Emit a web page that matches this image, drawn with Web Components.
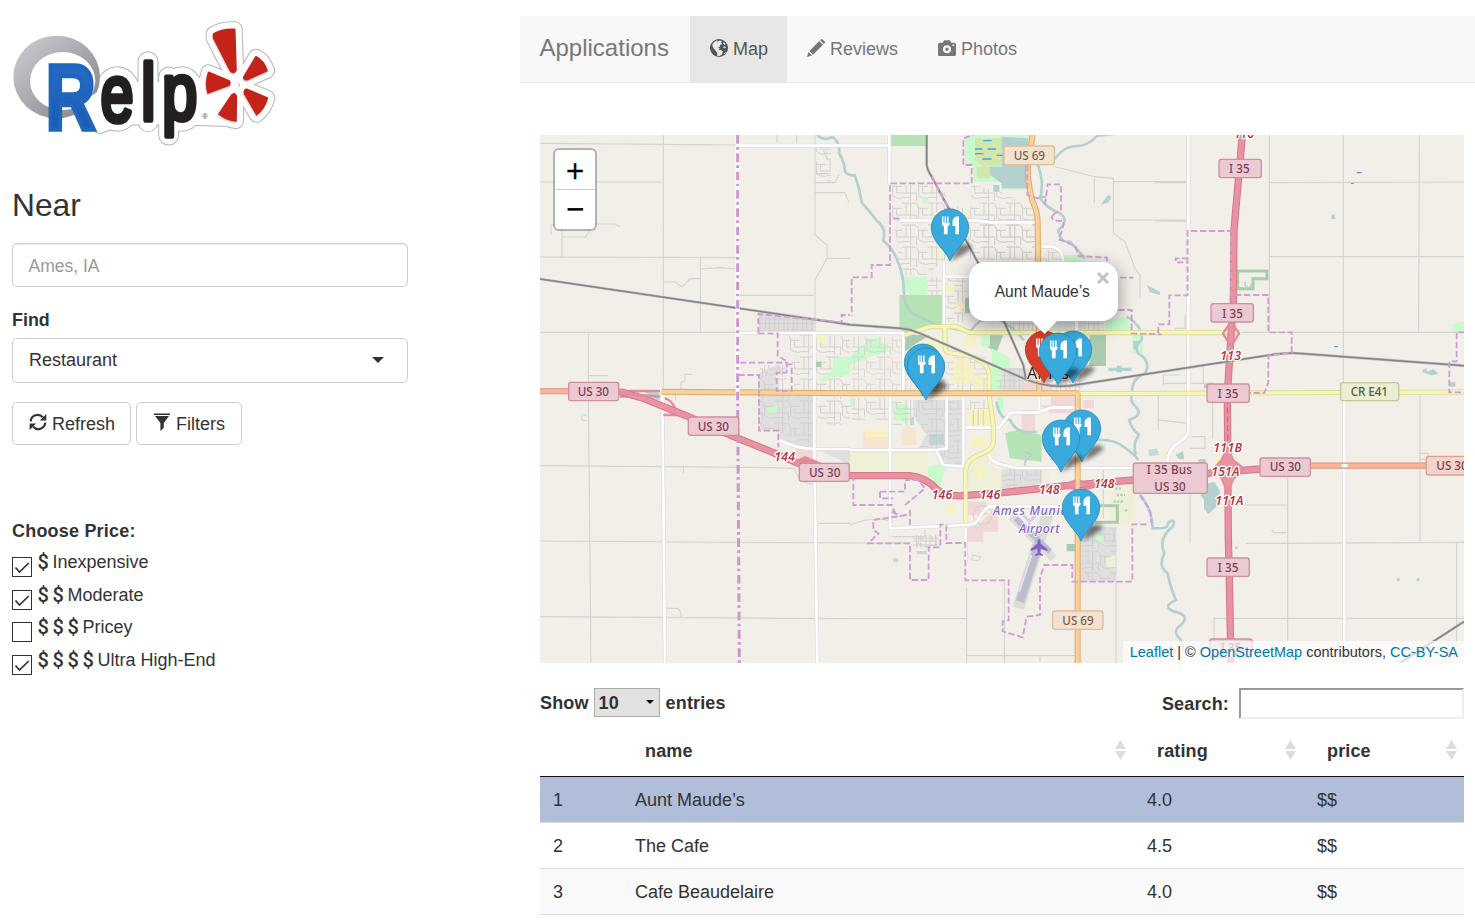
<!DOCTYPE html>
<html lang="en">
<head>
<meta charset="utf-8">
<title>Relp</title>
<style>
body{margin:0;background:#fff;font:18px/1.43 "Liberation Sans",Arial,sans-serif;color:#333;overflow:hidden}
</style>
</head>
<body>
<relp-page>
  <relp-logo slot="side"></relp-logo>
  <search-form slot="side">
    <icon-button slot="actions" icon="refresh">Refresh</icon-button>
    <icon-button slot="actions" icon="filter">Filters</icon-button>
  </search-form>
  <price-group slot="side" heading="Choose Price:">
    <price-option level="1" checked>Inexpensive</price-option>
    <price-option level="2" checked>Moderate</price-option>
    <price-option level="3">Pricey</price-option>
    <price-option level="4" checked>Ultra High-End</price-option>
  </price-group>
  <nav-bar slot="main" brand="Applications">
    <nav-tab icon="globe" active>Map</nav-tab>
    <nav-tab icon="pencil">Reviews</nav-tab>
    <nav-tab icon="camera">Photos</nav-tab>
  </nav-bar>
  <street-map slot="main">
    <map-pin style="left:390.7px;top:73.7px"></map-pin>
    <map-pin style="left:364.2px;top:209.3px"></map-pin>
    <map-pin style="left:366.5px;top:212.6px"></map-pin>
    <map-pin color="red" style="left:485px;top:195.5px"></map-pin>
    <map-pin style="left:513.7px;top:195.7px"></map-pin>
    <map-pin style="left:498.600px;top:198px"></map-pin>
    <map-pin style="left:522.500px;top:274.500px"></map-pin>
    <map-pin style="left:501.500px;top:284.500px"></map-pin>
    <map-pin style="left:521.500px;top:353.500px"></map-pin>
    <map-popup>Aunt Maude’s</map-popup>
  </street-map>
  <place-table slot="main"></place-table>
</relp-page>

<script>
const define = (name, html, setup) => {
  const t = document.createElement('template');
  t.innerHTML = html;
  customElements.define(name, class extends HTMLElement {
    constructor() {
      super();
      this.attachShadow({mode: 'open'}).append(t.content.cloneNode(true));
    }
    connectedCallback() { if (setup) setup(this, this.shadowRoot); }
  });
};

const icons = {
  refresh: '<g fill="none" stroke="currentColor" stroke-width="2.200"><path d="M1.700 8.300A7 7 0 0 1 13.800 4.200M16.300 9.700A7 7 0 0 1 4.200 13.800"/></g><path d="M17.300 1V7.500H10.800zM.7 17V10.500H7.200z"/>',
  filter: '<path d="M1 .5h16v1.500H1zM2 3h14l-5.200 7v4.700L7.400 18v-8z"/>',
  globe: '<circle cx="9" cy="9" r="9"/><path fill="#e7e7e7" d="M2.200 5.500Q5 1.600 7.500 1.300L7.600 3l1.900-1.600 2.300.5-.7 1.800 1.200 1.200-2 .9-.5 2-1.800.6 1.700.9-1.200 1.500 2.600.2 1.600 1.500-.6 2.900-3.200 1.900-1.700-.4.200-3-1.900-2.200L3 8.500z"/><path fill="#e7e7e7" d="m13 4.100 1.500-.600 1.100 1.600-1.500 1zM12.900 8l2.300-.7.5 1.500-1.500.6zM14 14.500l1.400-1.600.600.600-1.200 1.600z"/>',
  pencil: '<path d="M0 18l1.400-5 3.600 3.600zM2.400 12 12.300 2.100l3.700 3.700L6.100 15.700zM13.200 1.200l.8-.8q.8-.7 1.600 0l2.100 2.100q.7.800 0 1.600l-.8.8z"/>',
  camera: '<path fill-rule="evenodd" d="M1.600 3.800h3L6.200 1.300h5.600l1.600 2.500h3q1.600 0 1.600 1.600v10q0 1.600-1.600 1.600H1.600Q0 17 0 15.400v-10q0-1.600 1.600-1.600zM9 6.300a4 4 0 1 0 0 8 4 4 0 0 0 0-8zm0 2.300a1.700 1.700 0 1 1 0 3.400 1.700 1.700 0 0 1 0-3.400zM14.500 5.500h1.700v1.400h-1.700z"/>'
};

customElements.define('ui-icon', class extends HTMLElement {
  static observedAttributes = ['name'];
  constructor() {
    super();
    this.attachShadow({mode: 'open'}).innerHTML = '<style>:host{display:inline-block;width:18px;height:18px;flex:none}svg{display:block;fill:currentColor}</style><svg width="18" height="18" viewBox="0 0 18 18"></svg>';
  }
  attributeChangedCallback(_, old, name) { this.shadowRoot.querySelector('svg').innerHTML = icons[name] || ''; }
});

define('relp-page', `<style>
:host{display:grid;grid-template-columns:520px 955px;width:1475px;height:920px;overflow:hidden}
aside{box-sizing:border-box;padding:10px 112px 0 12px}
main{padding-top:16px;min-width:0}
</style><aside><slot name="side"></slot></aside><main><slot name="main"></slot></main>`);

define('relp-logo', `<style>:host{display:block;margin-left:-12px;height:145px}svg{display:block}
.e{font:238px "Liberation Sans",sans-serif;stroke-linejoin:round}
.r{font:bold 278px "Liberation Sans",sans-serif}</style>
<svg width="290" height="145" viewBox="0 0 870 435">
<defs>
<linearGradient id="ring" x1="0" y1="0" x2="1" y2="1"><stop offset="0" stop-color="#ced0d4"/><stop offset="1" stop-color="#7f8187"/></linearGradient>
<linearGradient id="blue" x1="0" y1="0" x2="0" y2="1"><stop offset="0" stop-color="#2a6fce"/><stop offset="1" stop-color="#1559a8"/></linearGradient>
<g id="star"><path d="M641 72Q665 56 704 58L708 180Q700 193 691 182L641 84Z"/><path d="M731 202L768 140Q792 152 801 182L742 209Q732 210 731 202Z"/><path d="M626 187L688 213Q692 220 687 226L624 249Q615 218 626 187Z"/><path d="M740 238L802 264Q794 295 770 314L733 250Q733 238 740 238Z"/><path d="M703 251L709 258L708 333Q680 330 657 312L696 254Z"/></g>
<g id="body"><ellipse cx="352" cy="267" rx="48" ry="72"/><rect x="439" y="150" width="10" height="190" rx="5"/><ellipse cx="545" cy="267" rx="46" ry="72"/><rect x="501" y="196" width="10" height="184" rx="5"/><path d="M340 240H560L690 200L700 325L560 320H340Z"/><path d="M300 345L340 330V260L310 280Z"/></g>
</defs>
<g fill="#b5b5b5" stroke="#b5b5b5" stroke-width="53" stroke-linejoin="round"><use href="#star" stroke-width="48"/><use href="#body"/></g>
<g fill="#fff" stroke="#fff" stroke-width="47" stroke-linejoin="round"><use href="#star" stroke-width="42"/><use href="#body"/></g>
<path fill="url(#ring)" fill-rule="evenodd" d="M40 201A130 124 0 1 1 300 201A130 124 0 1 1 40 201ZM90 213A98 87 0 1 0 286 213A98 87 0 1 0 90 213Z"/>
<path fill="#fff" d="M232 285L286 250L303 240L303 330L292 365H270Z"/>
<text class="r" fill="url(#blue)" stroke="#1f66bd" stroke-width="14" transform="translate(137 356) scale(.745 1)">R</text>
<g class="e" fill="#231f20" stroke="#231f20" stroke-width="17"><text transform="translate(302 334) scale(.74 1)">e</text><text transform="translate(424 331) scale(.8 1)">l</text><text transform="translate(487 326) scale(.79 1)">p</text></g>
<text x="607" y="328" style="font:22px 'Liberation Sans'" fill="#444">®</text>
<use href="#star" fill="#eadcdc" stroke="#eadcdc" stroke-width="6" stroke-linejoin="round" transform="translate(-2 5)"/>
<use href="#star" fill="#c4231a" stroke="#c4231a" stroke-width="5" stroke-linejoin="round"/>
</svg>`);

define('search-form', `<style>
:host{display:block;padding-top:27px;width:396px}
h3{font:31.700px/46px "Liberation Sans",sans-serif;margin:0 0 15px}
.box{box-sizing:border-box;border:1px solid #ccc;border-radius:5px;height:44px;padding:0 16px;line-height:42px;display:flex;justify-content:space-between;align-items:center}
.in{color:#999;font-size:17.500px;box-shadow:inset 0 1px 1px rgba(0,0,0,.075)}.in span{padding-top:1px;margin-left:-.5px}
label{display:block;font-weight:bold;line-height:26px;margin:20px 0 5px;font-size:17.900px}
.sel{height:45px;padding-right:23px}.sel span{padding-bottom:1px}
.sel i{border:6px solid transparent;border-top-color:#333;border-bottom:0;margin-top:-1px}
.act{display:flex;gap:5px;padding-top:19px}
</style><h3>Near</h3><div class="box in"><span>Ames, IA</span></div><label>Find</label><div class="box sel"><span>Restaurant</span><i></i></div><div class="act"><slot name="actions"></slot></div>`);

define('icon-button', `<style>:host{box-sizing:border-box;display:inline-flex;align-items:center;gap:5px;height:43px;border:1px solid #ccc;border-radius:5px;padding:0 15px 0 16px}
:host([icon=filter]){padding-right:16px}
ui-icon{position:relative;top:-2px}span{padding-top:2px}</style><ui-icon></ui-icon><span><slot></slot></span>`,
  (el, r) => r.querySelector('ui-icon').setAttribute('name', el.getAttribute('icon')));
</script>
<script>
define('price-group', `<style>:host{display:block;padding-top:73px}b{display:block;line-height:26px;margin-bottom:4px;letter-spacing:.2px}</style><b></b><slot></slot>`,
  (el, r) => { r.querySelector('b').textContent = el.getAttribute('heading'); });

define('price-option', `<style>:host{display:flex;height:32.700px;align-items:flex-start;line-height:28px}
.c{box-sizing:border-box;width:20px;height:20px;border:1px solid #333;margin:9px 5.500px 0 0}
svg{display:block}:host(:not([checked])) svg{display:none}
.d{display:flex;font:500 20px/28px Roboto,sans-serif}.d span{width:15px}
</style><span class="c"><svg width="18" height="18" viewBox="0 0 18 18"><path d="M2.500 9.500l4 4.500L15.700 5" fill="none" stroke="#333" stroke-width="1.700"/></svg></span><span class="d"></span><span class="t"><slot></slot></span>`,
  (el, r) => { r.querySelector('.d').innerHTML = '<span>$</span>'.repeat(+el.getAttribute('level')); });

define('nav-bar', `<style>:host{display:flex;height:66px;background:#f8f8f8;border-bottom:1px solid #e7e7e7;color:#777}
b{font:24px/64px "Liberation Sans",sans-serif;padding:0 20.500px 0 19.500px;width:130px}</style><b></b><slot></slot>`,
  (el, r) => { r.querySelector('b').textContent = el.getAttribute('brand'); });

define('nav-tab', `<style>:host{display:flex;align-items:center;gap:5px;padding:0 20px;color:#777}:host([active]){background:#e7e7e7;color:#555;padding-right:19px}ui-icon{position:relative;top:-1px}span{padding-top:1px}
</style><ui-icon></ui-icon><span><slot></slot></span>`,
  (el, r) => r.querySelector('ui-icon').setAttribute('name', el.getAttribute('icon')));

define('map-pin', `<style>:host{display:block;position:absolute;width:38px;height:52px}svg{display:block;overflow:visible}:host{--c:#38aadd;--e:#267fa8}:host([color=red]){--c:#d63e2a;--e:#a52d1e}</style>
<svg width="38" height="52" viewBox="0 0 38 52"><defs><filter id="b" x="-40%" y="-40%" width="180%" height="180%"><feGaussianBlur stdDeviation="2.200"/></filter></defs>
<path d="M19 52L28 36Q38 34 41 38Q37 44 19 52Z" opacity=".5" filter="url(#b)"/>
<path d="M19 52C14.500 41 .3 32 .3 18.700a18.700 18.700 0 0 1 37.400 0C37.700 32 23.500 41 19 52Z" style="fill:var(--c);stroke:var(--e)" stroke-width=".7"/>
<path fill="#fff" d="M11 7.500h1.500V14h1V7.500h1.600V14h1V7.500h1.500V14h1V7.500V15q0 1.500-2 2.500v7.700h-3.700V17.500Q11 16.500 11 15zM28 7.500v17.700h-3.600V17h-2.900v-4.500q.5-3.500 3.500-5z"/></svg>`);

define('map-popup', `<style>:host{position:absolute;left:429px;top:127px;width:149px;height:58.500px;display:flex;align-items:center;justify-content:center;background:#fff;border-radius:16px;font-size:15.600px;box-shadow:0 4px 18px rgba(0,0,0,.4)}
.x{position:absolute;right:8.500px;top:9px}.t{position:absolute;top:58px;left:62px}svg{display:block}span{padding:1.500px 2.500px 0 0}</style>
<svg class="t" width="27" height="15"><path d="M0 0H27L13.500 14Z" fill="#fff"/></svg>
<span><slot></slot></span><svg class="x" width="14" height="14"><path d="M2 2l10 10M12 2L2 12" stroke="#c3c3c3" stroke-width="3"/></svg>`);

define('street-map', `<style>
:host{display:block;position:relative;width:924px;height:528px;margin:52px 0 0 20px;overflow:hidden;background:#f2efe9}
svg{display:block}
.z{position:absolute;left:13px;top:13px;border:2px solid rgba(0,0,0,.25);border-radius:6px;background:#fff;background-clip:padding-box;width:40px;height:79px;display:grid;grid-template-rows:39px 40px;font:24px/42px "DejaVu Sans",sans-serif;text-align:center;color:#000;-webkit-text-stroke:.4px #000}
.z span+span{border-top:1px solid #ccc;line-height:39px}
.a{position:absolute;right:0;bottom:0;height:22px;line-height:23px;padding:0 6px 0 7px;background:rgba(255,255,255,.7);font-size:14.500px;white-space:nowrap}
.a span{color:#0078a8}
.mi{fill:none;stroke:#d3d3d1;stroke-width:3.300}
.wc{fill:none;stroke:#dedbd8;stroke-width:12}.w{fill:none;stroke:#fff;stroke-width:8}
.bd{fill:none;stroke:#d19dd2;stroke-width:5.500;stroke-dasharray:19 8}
.wa{fill:none;stroke:#b4d0d1;stroke-width:8;stroke-linejoin:round}
.lk{fill:#b4d0d1}.gr{fill:#b5e3b5}.lg{fill:#c8facc}.dg{fill:#aacbaf}.re{fill:#e0dfdf}.ye{fill:#f7f3bd}.pk{fill:#f1d8d6}.ed{fill:#f0f0d8}
.sh rect{stroke-width:4;rx:7px}.sh text,.ex text{font-family:"Noto Sans",sans-serif;text-anchor:middle}
.sh text{font-size:35px;font-weight:500;fill:#7e3e58}.ex text{font-size:37px;font-style:italic;font-weight:600;fill:#b03a42;stroke:#fff;stroke-width:8;paint-order:stroke;stroke-linejoin:round}
</style>
<svg width="924" height="528" viewBox="0 0 2772 1584">
<defs>
<pattern id="s1" width="78" height="66" patternUnits="userSpaceOnUse"><path d="M0 6H40Q48 8 50 22H78M12 6V42H0M26 6V66M12 42H44V66M50 22V50Q60 60 78 58M62 22V42H78M0 56H26" fill="none" stroke="#d2d0ce" stroke-width="3"/></pattern>
<pattern id="s2" width="28" height="34" patternUnits="userSpaceOnUse"><path d="M4 0V34M16 0V34M0 8H28M0 22H28" fill="none" stroke="#cdcbca" stroke-width="2.600"/></pattern>
</defs>
<!-- land use -->
<g>
<path class="re" d="M657 537L822 555V592H657Z"/><path fill="url(#s2)" d="M657 537L822 555V592H657Z"/>
<path class="re" d="M657 715L715 687L735 715H708V770H657Z"/><path class="re" d="M657 780H822V940L780 938L713 905V885H657Z"/><path fill="url(#s1)" d="M660 690H740V770H822V935L715 890H660Z"/>
<path fill="url(#s1)" d="M745 600H820V765H765Z"/><path fill="url(#s1)" d="M828 602H930V770H828Z"/><path fill="url(#s1)" d="M832 785H930V870H832ZM828 40h45v100h-45z"/>
<path class="lg" d="M840 735L880 705V670L930 665V720L880 725L850 742Z"/><path class="lg" d="M682 818l30-6v20l-26 2z"/><path class="dg" d="M828 680h16v16h-16z"/><path class="ye" d="M830 600h28v24h-28z"/>
<path class="lk" d="M312 768H358V796L335 790Z"/>
<path class="re" d="M835 945H930V985H920Z"/><path class="pk" d="M765 940h55v35h-55z"/>
</g>
<g transform="translate(930 0)">
<path class="gr" d="M120 0H228V33H120Z"/><path class="lg" d="M345 0H540V165H455V140H370V90H345Z"/><path fill="#d2e8aa" d="M375 10H455V90L400 95L375 75ZM380 95h40v35h-40z"/><path class="lk" d="M455 5L535 10V160H455V145L420 120V95H455Z"/>
<path d="M400 17h25M375 42h22M375 56h25M413 42h25M397 72h28M440 61h18" stroke="#4c9be0" stroke-width="4"/>
<path fill="url(#s1)" d="M125 150H270L300 200L360 230L365 150L450 170L555 220V375H360L340 320H290V370L230 420H150L140 320L125 250Z"/>
<path fill="url(#s1)" d="M225 425H350L360 560H225ZM400 250H555V370H400ZM572 345H635V380H572Z"/><path fill="url(#s2)" d="M480 560H760V588H480Z"/>
<path class="ye" d="M255 230h25v18h-25zM265 340h10v30h-10zM290 450h22v22h-22zM320 500h22v22h-22zM335 235h25v12h-25z"/>
<path class="gr" d="M148 480H280V580L240 575L165 600L148 575Z"/><path class="lg" d="M155 425H232V480H180L155 460ZM220 185l20 12-22 10zM643 360h50v22h-50z"/><path d="M175 500l20 30M210 495l30 50M225 540l30 20M250 500l15 40" stroke="#bfe3a8" stroke-width="5"/>
<path class="dg" d="M165 600H240L200 625L165 650ZM718 600H768V693H718ZM395 600H460L440 650L400 630ZM345 488h15v45h-15z"/>
<path class="lg" d="M0 665L35 630L115 625V650L60 665L0 690ZM45 610h50v20h-50zM770 555L830 545L850 590H765ZM848 600h30v55h-30zM395 600h25v35h-25z"/>
<path class="lg" d="M425 640L480 670V730L440 775H425Z"/>
<path fill="url(#s1)" d="M5 605H155V765H5ZM165 665H285V765H165ZM285 665H410V765H285Z" opacity=".75"/>
<path class="ye" d="M230 610h45v30h-45zM340 605h40v35h-40zM310 670l60 15v60h-60zM215 650h25v55h-25zM370 720h30v45h-30z" opacity=".8"/>
<path class="re" d="M455 700H525V770H455ZM590 560H700V590H590Z"/><path fill="url(#s2)" d="M440 735H700V775H440ZM455 700h70v50h-70z"/><path class="pk" d="M520 700h80v65h-80z"/>
<path class="lk" d="M775 698h70v10h-70zM800 692h15v20h-15zM755 205l20-25 10 5-12 18-22 6zM890 450l40 20v10l-30-8zM850 618h14v24h-14zM430 150h18v20h-18z"/>
</g>
<g transform="translate(930 780)">
<path class="ed" d="M0 170H230L235 245L0 232ZM355 185L440 160L430 220H600V260L360 290Z"/><path class="ed" d="M780 275h75v115h-75z"/>
<path class="lg" d="M130 25L175 30V100L160 80L130 75ZM232 215L290 205L270 285L235 265Z"/><path fill="#f8e5cf" d="M38 108h80v52h-80zM155 100h45v50h-45z"/>
<path class="re" d="M190 15H345V210H285L260 170H200L230 120L190 60Z"/><path fill="url(#s1)" d="M190 15H345V210H285L260 170H200L230 120L190 60Z"/><path fill="url(#s1)" d="M5 10H115V75H5ZM128 15H190V90H128ZM350 15H415V45H350Z"/>
<path class="ye" d="M358 42h60v50h-60zM45 105h70v20h-70zM365 125h45v30h-45zM380 215h20v40h-20zM290 330h25v25h-25z"/>
<path d="M370 45v45M385 45v45M400 45v45" stroke="#d6d0b0" stroke-width="3"/>
<path class="lk" d="M238 118h45v32h-45zM182 65h10v25h-10zM130 490h14v12h-14zM200 468h30v10h-30zM895 165l25-5 8 20-30 4z" opacity=".7"/>
<path class="gr" d="M465 115L500 105L575 120V200L480 190Z"/><path class="lg" d="M440 5h20v55l-20-25z"/><path class="pk" d="M515 45h40v65h-40zM568 30h35v-25h70v50h-70zM700 15h32v25h-32zM350 400L390 385L440 335L445 410H400V440H350ZM350 320h60v40h-60z"/>
<path class="re" d="M455 225L575 215V265L455 290ZM690 395H800V560H690Z"/><path fill="url(#s1)" d="M455 225L575 215V265L455 290ZM690 395H800V555H690ZM190 422h70v35h-70z"/><path fill="url(#s2)" d="M190 420h75v38h-75z"/><path class="lg" d="M740 415l25 18-10 10-20-8z"/><path class="ed" d="M768 490l28-10v35h-28z"/>
<path class="dg" d="M650 447h30v22h-30z"/><path d="M715 332H802V382H735" fill="none" stroke="#aacbaf" stroke-width="9"/>
<path class="lg" d="M0 40L10 30V0H0Z"/><path d="M795 280h20M800 300h25M790 320h30M825 345l10 5" stroke="#a9cfc3" stroke-width="7" stroke-dasharray="7 4"/>
<g fill="none"><path d="M595 350L505 640" stroke="#deddd2" stroke-width="36"/><path d="M485 365L610 490" stroke="#deddd2" stroke-width="24"/><path d="M570 435L510 620" stroke="#bbbdd0" stroke-width="26"/><path d="M497 370L600 470" stroke="#bbbdd0" stroke-width="18"/><path d="M545 480L508 590" stroke="#e4e4f0" stroke-width="5"/><path d="M518 360l22 20 20-25" stroke="#d8c8ec" stroke-width="8"/></g>
</g>
<g transform="translate(1845 0)"><path d="M248 461V408H336V431H294V461Z" fill="none" stroke="#a5cfa5" stroke-width="9"/><path d="M270 440q0 18 10 18t10-14" class="wa" style="stroke-width:5"/><path class="lg" d="M892 570L915 560H930V592H892Z"/><path class="lk" d="M530 240l8-2 4 14h-14zM800 705l15-5 2 10 18-8 15 15-20 4-25-8zM885 742h16v13h-16zM147 747h12v12h-12z"/><path d="M605 113h15M588 145h8M538 635h10" stroke="#4c9be0" stroke-width="4"/></g>
<g transform="translate(1845 780)"><path class="lk" d="M150 265L180 262L195 290L185 335L160 357L147 340V315L137 300ZM62 180l22-12 3 25h-15zM130 192h22v20h-22zM240 455h7v7h-7zM726 550h8v8h-8zM785 550h8v8h-8z"/><path class="ye" d="M25 168h14v14h-14zM175 192l30-5-10 30z"/></g>
<!-- waterways -->
<g class="wa">
<path d="M832 0q20 20 45 6q25 15 20 48q18 30 18 56q10 12 30 12q15 40 20 80q35 40 45 55q30 20 20 60q30 25 40 55q20 40 22 100q0 60 50 75q60 35 150 40q40-55 90-30q40 20 70 60"/>
<path d="M1490 80q25 60 10 110q20 30 60 45q30 20-5 50q5 40 35 35l45 50"/><path d="M1540 78q30-45 70-45q35 0 60-30l70-8" stroke-width="7"/>
<path d="M1760 545q50 30 45 70q-25 20-10 40q40 25 20 60q-45 20-38 65q-10 15 10 35q25 25-20 40q10 30 30 45q-20 25-10 60"/>
<path d="M1370 800q5 50 40 55q20 45 80 35M1660 915q60-5 90 20q30 20 45 40M1800 1080q35 40 38 100l30-1q18-1 16-16q25-15 14 12q-45 35-25 80q-20 40 10 60q10 50 25 80q-45 20-5 35q50 10 20 40q-30 20 0 45l10 35"/>
<path d="M1455 950l20 10-20 20v20" stroke-width="5"/>
</g>
<!-- minor roads -->
<path class="mi" d="M0 25L590 30M370 0V790M0 141H370M0 366L590 368M481 368V592M481 402l60-4 45 4M370 441h35l22 15 23-25h30M0 592H590M145 592V740M33 300V270h30M66 285v80M66 306h72l12-22M160 267h65l15 8M825 0V300l36 30v40l-36 65V592M861 370h70M600 481H822M825 173h90l12 30M825 143h60l12-25M825 116h45M145 722h60M455 718h-20v20l-12 5v20M711 0v22M770 0v22M850 45l14 30M850 60l12-10"/>
<path class="mi" d="M1545 95l120 30 55 5v165l35 25 30 80 15 20v70M1720 140h220M1720 255h220M1663 130v75M1845 143h95M1845 257l95 2M2188 0V592M2410 0V760M2638 0L2636 592M2190 143L2772 141M2190 365H2772M2105 592H2772M1870 745h150v50M1870 750v-30h50M1990 690v55M1905 580h30v-40"/>
<path class="mi" d="M145 785L153 1584M0 992L640 997L765 1000Q772 1045 825 1048M0 1218L930 1224M0 1445L930 1451M430 995v20M835 1165h95M380 1420h35q10 10 7 28M140 842q-15-10-15 5t15 8M407 780v18"/>
<path class="mi" d="M930 1224h180M930 1451h350M1280 1360V1584M1280 1562h330M1393 1340V1584M1500 1565v16M1728 1340V1584M1690 1005V1150M2118 1225h100l554-3M2243 1010V1520M2105 1110h138M2022 1450H2772M2022 1450v80M2750 1222V1520M2640 780V1220M1950 985V1225M1855 780v105M1855 855l90 10M2195 1185l5 8h40M1955 905h40v35h-45M2640 955h25v18h-25M2018 780v130"/>
<path class="mi" d="M930 1170q70-30 130-10M1055 1205h100v-20M1300 1260l22 6-8 12-20-4z"/>
<circle cx="1328" cy="1140" r="28" class="mi"/>
<!-- secondary streets -->
<path class="wc" d="M600 32H1048V0M1048 0V145M593 594H1090V775M823 594V950L832 1584M367 780L375 1584M1080 257H1310l40 5H1488M1212 380V575M1212 425h80M1502 335h35q30 5 33 45M1610 557v35M1050 780V1180L1280 1170Q1310 1170 1320 1145Q1340 1110 1360 1115H1580M930 945H1190L1220 940V780M1190 950l20 40 60 5V780M1277 878h100l35-45h80l40-15h80M1497 825V780M1345 960q15 25 35 27l50 12H1780M1277 1180v100M715 915q60 28 110 27H930M1945 0V890q-5 20-30 33-30 20-33 55M2413 760V1584"/>
<path class="w" d="M600 32H1048V0M1048 0V145M593 594H1090V775M823 594V950L832 1584M367 780L375 1584M1080 257H1310l40 5H1488M1212 380V575M1212 425h80M1502 335h35q30 5 33 45M1610 557v35M1050 780V1180L1280 1170Q1310 1170 1320 1145Q1340 1110 1360 1115H1580M930 945H1190L1220 940V780M1190 950l20 40 60 5V780M1277 878h100l35-45h80l40-15h80M1497 825V780M1345 960q15 25 35 27l50 12H1780M1277 1180v100M715 915q60 28 110 27H930M1945 0V890q-5 20-30 33-30 20-33 55M2413 760V1584"/>
<!-- county roads and highways -->
<g fill="none" stroke-linejoin="round">
<path d="M1095 600L1170 575H1250L1290 593H2100M1215 580V635Q1215 655 1240 655Q1345 665 1347 720V780L1360 870V920Q1360 945 1315 960Q1277 975 1277 1010V1165M1620 776L2772 771" stroke="#dcdb93" stroke-width="15"/>
<path d="M1095 600L1170 575H1250L1290 593H2100M1215 580V635Q1215 655 1240 655Q1345 665 1347 720V780L1360 870V920Q1360 945 1315 960Q1277 975 1277 1010V1165M1620 776L2772 771" stroke="#f6f6b8" stroke-width="10"/>
<path d="M365 770L930 775H1615M1478 0L1465 80Q1460 140 1478 200Q1493 230 1493 260L1498 775M1613 775V1584" stroke="#deaa68" stroke-width="18"/>
<path d="M365 770L930 775H1615M1478 0L1465 80Q1460 140 1478 200Q1493 230 1493 260L1498 775M1613 775V1584" stroke="#fad09b" stroke-width="12"/>
<path d="M0 769H240" stroke="#d88c7a" stroke-width="18"/><path d="M0 769H240" stroke="#f9b29c" stroke-width="13"/>
<path d="M200 768H360M240 785h35l20-10M375 790q20 5 30 30M370 840h60" stroke="#e28b9d" stroke-width="7"/>
<path d="M240 770L310 790L445 845L570 900L705 955L775 985L850 1022H1110Q1160 1028 1192 1065Q1220 1085 1270 1082L1390 1073L1580 1052L1780 1035L2000 1015L2160 1002M2107 0L2082 285L2080 500L2073 600L2062 780L2065 1210L2068 1340L2073 1584" stroke="#d67688" stroke-width="22"/>
<path d="M240 770L310 790L445 845L570 900L705 955L775 985L850 1022H1110Q1160 1028 1192 1065Q1220 1085 1270 1082L1390 1073L1580 1052L1780 1035L2000 1015L2160 1002M2107 0L2082 285L2080 500L2073 600L2062 780L2065 1210L2068 1340L2073 1584" stroke="#e892a2" stroke-width="16"/>
<path d="M2312 992H2772" stroke="#dd947c" stroke-width="19"/><path d="M2312 992H2772" stroke="#f9b29c" stroke-width="13"/><path d="M2405 992h18" stroke="#fff" stroke-width="9"/>
<path d="M2073 560l-24 35 24 40M2073 560l24 35-24 40M1540 1060l70-25 50 15M1545 1050l80 15 60-15M240 775L360 785" stroke="#e28b9d" stroke-width="7"/>
<path d="M2063 935l-20 40-22 25 22 30 20 45 18-42 32-33-32-25z" fill="#e892a2" stroke="#e28b9d" stroke-width="4"/><path d="M770 975l25-12 50 20-60 5z" fill="#e28b9d"/>
<path d="M1613 1010V1075" stroke="#fad09b" stroke-width="12"/><path d="M1277 1045V1165" stroke="#f6f6b8" stroke-width="11"/>
<path d="M2063 790V930" stroke="#b95c9a" stroke-width="3" stroke-dasharray="18 9"/>
</g>
<!-- railways -->
<g fill="none" stroke="#bdbdbd" stroke-width="8"><path d="M1160 0V90Q1162 105 1175 125L1315 385L1450 690L1458 735M0 432L930 569L1080 580Q1110 582 1140 595L1450 730Q1530 765 1620 748L2190 660Q2245 652 2275 655L2772 692M2772 1460L2580 1584"/></g>
<g fill="none" stroke="#858585" stroke-width="4.500"><path d="M1160 0V90Q1162 105 1175 125L1315 385L1450 690L1458 735M0 432L930 569L1080 580Q1110 582 1140 595L1450 730Q1530 765 1620 748L2190 660Q2245 652 2275 655L2772 692M2772 1460L2580 1584"/></g>
<!-- boundaries -->
<path d="M593 0V795" stroke="#fff" stroke-width="12"/><path d="M593 0V790L598 1584" fill="none" stroke="#cc97cc" stroke-width="9" stroke-dasharray="26 10 8 11"/>
<g class="bd"><path d="M655 595V537l250 25v-22h25M655 595h58v68l27 15v12M600 683h140v30h-30v55h45v-80h-20M595 720h62V887h58v50"/>
<g transform="translate(930 0)"><path d="M148 250H120V145H365V90h-25V10l30-10M120 250v140H65v37H5v115M532 90v90l30 10 25-5M585 210l8-62h40v75l-22 15M611 238q-20 20 30 20q0 20-15 55l50 20 10 30 85 5v60h80M805 525h40v70l90 3M245 125l50 95"/></g>
<g transform="translate(1845 0)"><path d="M10 595v-27h33v-87h55V288h130v192h112v112h70v60l-70 10v80l-12 32h-45M100 370H62v12h38M930 592h-25v87h-22v93h45"/></g>
<g transform="translate(930 780)"><path d="M10 240v90h115l15 35M90 290h75v-30M90 290v20h40M165 330L225 280l-20-25h-40M180 345v45M125 350l30 15M170 360l-100 15v30l15 10-30 30h125v110h56v-98h35v-68h18v55h57v112h130v120l-18 3v30l60 18 12-62 40-5v-110l12-40h85v50h180V388h50M870 300l30 45 5 40"/></g></g>
<!-- place names -->
<text x="1461" y="732" style="font:48px 'Noto Sans',sans-serif" fill="#222" stroke="#fff" stroke-width="4" paint-order="stroke">Ames</text>
<g style="font:italic 500 37px 'Noto Sans',sans-serif" fill="#8461c4" stroke="#fff" stroke-width="5" paint-order="stroke"><text x="1359" y="1140" textLength="290">Ames Municipal</text><text x="1437" y="1195" textLength="122">Airport</text></g>
<path d="M1497 1212q5 0 5 14l20 16v6l-20-7-1 12 8 6v4l-12-3-12 3v-4l8-6-1-12-20 7v-6l20-16q0-14 5-14z" fill="#8461c4"/>
<!-- exit numbers -->
<g class="ex"><text x="2112" y="8" textLength="60">116</text><text x="2072" y="676" textLength="62">113</text><text x="734" y="977" textLength="62">144</text><text x="1206" y="1092" textLength="62">146</text><text x="1350" y="1092" textLength="62">146</text><text x="1528" y="1077" textLength="62">148</text><text x="1693" y="1058" textLength="62">148</text><text x="2063" y="950" textLength="86">111B</text><text x="2056" y="1024" textLength="84">151A</text><text x="2068" y="1110" textLength="84">111A</text></g>
<g class="sh" fill="#ebcbd1" stroke="#d08f9e">
<rect x="86" y="742" width="150" height="55"/><rect x="445" y="846" width="151" height="55"/><rect x="778" y="985" width="150" height="54"/><rect x="2037" y="73" width="127" height="55"/><rect x="2013" y="506" width="127" height="55"/><rect x="2001" y="747" width="127" height="55"/><rect x="2001" y="1269" width="127" height="55"/><rect x="2009" y="1512" width="127" height="55"/><rect x="2160" y="969" width="151" height="55"/><rect x="1780" y="984" width="222" height="91"/>
<rect x="1392" y="33" width="151" height="56" fill="#f4e2d0" stroke="#dfbd97"/><rect x="1538" y="1428" width="151" height="55" fill="#f4e2d0" stroke="#dfbd97"/><rect x="2402" y="743" width="174" height="54" fill="#ecedd5" stroke="#c4c795"/><rect x="2659" y="964" width="151" height="56" fill="#f3d5cb" stroke="#dda18f"/>
<g stroke="none"><text x="160" y="784" textLength="94">US 30</text><text x="520" y="887" textLength="94">US 30</text><text x="854" y="1026" textLength="94">US 30</text><text x="2098" y="114" textLength="62">I 35</text><text x="2078" y="548" textLength="62">I 35</text><text x="2064" y="789" textLength="62">I 35</text><text x="2064" y="1310" textLength="62">I 35</text><text x="2073" y="1550" textLength="62">I 35</text><text x="2236" y="1009" textLength="94">US 30</text><text x="1888" y="1018" textLength="136">I 35 Bus</text><text x="1890" y="1067" textLength="94">US 30</text><text x="1468" y="75" textLength="94" style="fill:#74604a">US 69</text><text x="1614" y="1469" textLength="94" style="fill:#74604a">US 69</text><text x="2488" y="784" textLength="112" style="fill:#57603a">CR E41</text><text x="2736" y="1004" textLength="94">US 30</text></g></g>
</svg>
<slot></slot>
<div class="z"><span>+</span><span>−</span></div>
<div class="a"><span>Leaflet</span> | © <span>OpenStreetMap</span> contributors, <span>CC-BY-SA</span></div>`);

define('place-table', `<style>
:host{display:block;width:924px;margin:25px 0 0 20px}
.top{display:flex;justify-content:space-between;font-weight:bold;line-height:30px;height:31px;letter-spacing:.15px}
.top div{display:flex;align-items:center}
.n{box-sizing:border-box;width:66px;height:29px;border:1px solid #ababab;background:#e1e1e1;margin:-2px 6px 0 5px;display:flex;align-items:center;justify-content:space-between;padding:1px 5px 0 4px}
.n i{border:4px solid transparent;border-top-color:#000;border-bottom:0;margin-top:-1px}
.l{padding-bottom:1px;align-self:center}
.q{box-sizing:border-box;width:225px;height:31px;border:2px solid;border-color:#999 #eee #eee #999;margin-left:10px}
table{border-collapse:separate;border-spacing:0;width:924px;table-layout:fixed}
th{box-sizing:border-box;text-align:left;height:58px;padding:9px 0 0 24px;border-bottom:1px solid #111;vertical-align:middle;letter-spacing:.15px}
th>div{display:flex;justify-content:space-between;align-items:center;padding-right:7px}
th svg{display:block;margin-top:-4px}
td{box-sizing:border-box;height:46px;padding:2px 0 0 14px;border-bottom:1px solid #ddd}
td:first-child{padding-left:13px}
tr.s td{background:#b0bed9}tr.o td{background:#f9f9f9}
</style>
<div class="top"><div class="l"><span>Show</span><span class="n"><span>10</span><i></i></span><span>entries</span></div><div><span>Search:</span><span class="q"></span></div></div>
<table><colgroup><col style="width:81px"><col style="width:512px"><col style="width:170px"><col style="width:161px"></colgroup><thead><tr><th></th></tr></thead><tbody></tbody></table>`,
(el, r) => {
  const head = r.querySelector('thead tr');
  for (const h of ['name', 'rating', 'price'])
    head.insertAdjacentHTML('beforeend', `<th><div><span>${h}</span><svg width="11" height="20"><path d="M0 9L5.500 0L11 9ZM0 11H11L5.500 20Z" fill="#dcdcdc"/></svg></div></th>`);
  const rows = [['s', '1', 'Aunt Maude’s', '4.0', '$$'], ['', '2', 'The Cafe', '4.5', '$$'], ['o', '3', 'Cafe Beaudelaire', '4.0', '$$']];
  r.querySelector('tbody').innerHTML = rows.map(([c, ...v]) => `<tr class="${c}">${v.map(x => `<td>${x}</td>`).join('')}</tr>`).join('');
});
</script>
</body>
</html>
